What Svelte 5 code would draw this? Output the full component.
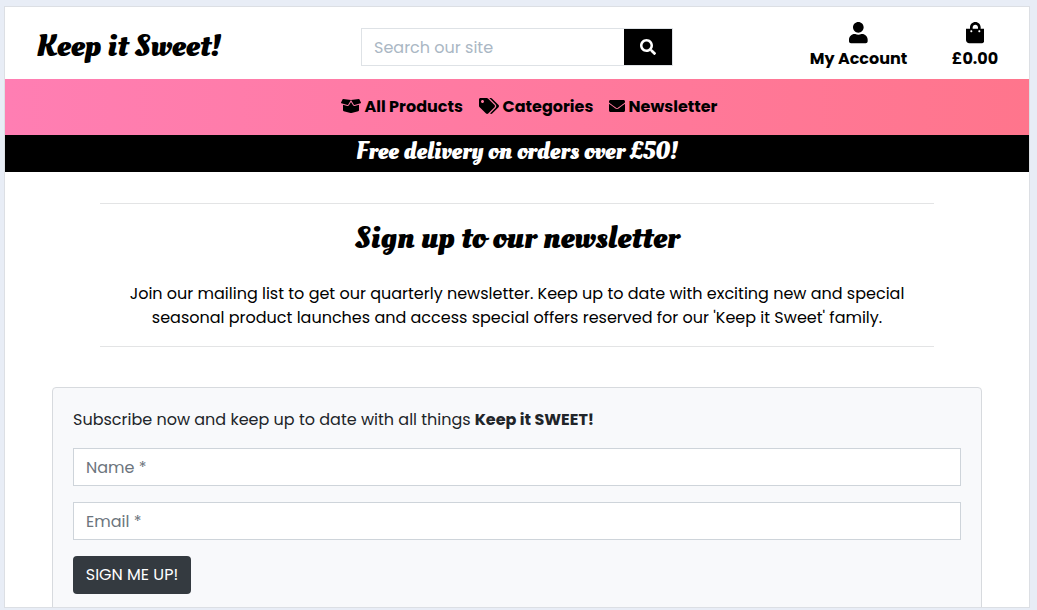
<script>
  const navItems = [
    {
      label: 'All Products',
      cls: 'products',
      viewBox: '0 0 640 512',
      width: 20,
      path: 'M425.7 256c-16.9 0-32.8-9-41.4-23.4L320 126l-64.2 106.6c-8.7 14.5-24.6 23.5-41.5 23.5-4.5 0-9-.6-13.3-1.9L64 215v178c0 14.7 10 27.5 24.2 31l216.2 54.1c10.2 2.5 20.9 2.5 31 0L551.8 424c14.2-3.6 24.2-16.4 24.2-31V215l-137 39.1c-4.3 1.3-8.8 1.9-13.3 1.9zm212.6-112.2L586.8 41c-3.1-6.2-9.8-9.8-16.7-8.9L320 64l91.7 152.1c3.8 6.3 11.4 9.3 18.5 7.3l197.9-56.5c9.9-2.9 14.7-13.9 10.2-23.1zM53.2 41L1.7 143.8c-4.6 9.2.3 20.2 10.1 23l197.9 56.5c7.1 2 14.7-1 18.5-7.3L320 64 69.8 32.1c-6.9-.8-13.5 2.7-16.6 8.9z'
    },
    {
      label: 'Categories',
      cls: 'categories',
      viewBox: '0 0 640 512',
      width: 20,
      path: 'M497.941 225.941L286.059 14.059A48 48 0 0 0 252.118 0H48C21.49 0 0 21.49 0 48v204.118a48 48 0 0 0 14.059 33.941l211.882 211.882c18.744 18.745 49.136 18.746 67.882 0l204.118-204.118c18.745-18.745 18.745-49.137 0-67.882zM112 160c-26.51 0-48-21.49-48-48s21.49-48 48-48 48 21.49 48 48-21.49 48-48 48zm513.941 133.823L421.823 497.941c-18.745 18.745-49.137 18.745-67.882 0l-.36-.36L527.64 323.522c16.999-16.999 26.362-39.6 26.362-63.64s-9.362-46.641-26.362-63.64L331.397 0h48.721a48 48 0 0 1 33.941 14.059l211.882 211.882c18.745 18.745 18.745 49.137 0 67.882z'
    },
    {
      label: 'Newsletter',
      cls: 'newsletter',
      viewBox: '0 0 512 512',
      width: 16,
      path: 'M502.3 190.8c3.9-3.1 9.7-.2 9.7 4.7V400c0 26.5-21.5 48-48 48H48c-26.5 0-48-21.5-48-48V195.6c0-5 5.7-7.8 9.7-4.7 22.4 17.4 52.1 39.5 154.1 113.6 21.1 15.4 56.7 47.8 92.2 47.6 35.7.3 72-32.8 92.3-47.6 102-74.1 131.6-96.3 154-113.7zM256 320c23.2.4 56.6-29.2 73.4-41.4 132.7-96.3 142.8-104.7 173.4-128.7 5.8-4.5 9.2-11.5 9.2-18.9v-19c0-26.5-21.5-48-48-48H48c-26.5 0-48 21.5-48 48v19c0 7.4 3.4 14.3 9.2 18.9 30.6 23.9 40.7 32.4 173.4 128.7 16.8 12.2 50.2 41.8 73.4 41.4z'
    }
  ];
</script>

<div class="page">
  <header class="top">
    <a class="brand" href="#home"><span>Keep it Sweet!</span></a>
    <form class="search">
      <input type="text" placeholder="Search our site" />
      <button type="button" aria-label="Search">
        <svg viewBox="0 0 512 512" width="16" height="16"><path fill="currentColor" d="M505 442.7L405.3 343c-4.5-4.5-10.6-7-17-7H372c27.6-35.3 44-79.7 44-128C416 93.1 322.9 0 208 0S0 93.1 0 208s93.1 208 208 208c48.3 0 92.7-16.4 128-44v16.3c0 6.4 2.5 12.5 7 17l99.7 99.7c9.4 9.4 24.6 9.4 33.9 0l28.3-28.3c9.4-9.4 9.4-24.6.1-34zM208 336c-70.7 0-128-57.2-128-128 0-70.7 57.2-128 128-128 70.7 0 128 57.2 128 128 0 70.7-57.2 128-128 128z" /></svg>
      </button>
    </form>
    <div class="actions">
      <a class="action account" href="#account">
        <svg viewBox="0 0 448 512" width="18.67" height="21.33"><path fill="currentColor" d="M224 256c70.7 0 128-57.3 128-128S294.7 0 224 0 96 57.3 96 128s57.3 128 128 128zm89.6 32h-16.7c-22.2 10.2-46.9 16-72.9 16s-50.6-5.8-72.9-16h-16.7C60.2 288 0 348.2 0 422.4V464c0 26.5 21.5 48 48 48h352c26.5 0 48-21.5 48-48v-41.6c0-74.2-60.2-134.4-134.4-134.4z" /></svg>
        <span>My Account</span>
      </a>
      <a class="action bag" href="#bag">
        <svg viewBox="0 0 448 512" width="18.67" height="21.33"><path fill="currentColor" d="M352 160v-32C352 57.42 294.579 0 224 0 153.42 0 96 57.42 96 128v32H0v272c0 44.183 35.817 80 80 80h288c44.183 0 80-35.817 80-80V160h-96zm-192-32c0-35.29 28.71-64 64-64s64 28.71 64 64v32H160v-32zm160 120c-13.255 0-24-10.745-24-24s10.745-24 24-24 24 10.745 24 24-10.745 24-24 24zm-192 0c-13.255 0-24-10.745-24-24s10.745-24 24-24 24 10.745 24 24-10.745 24-24 24z" /></svg>
        <span>£0.00</span>
      </a>
    </div>
  </header>

  <nav>
    {#each navItems as item}
      <a class={item.cls} href="#{item.cls}">
        <svg viewBox={item.viewBox} width={item.width} height="16"><path fill="currentColor" d={item.path} /></svg>
        <span>{item.label}</span>
      </a>
    {/each}
  </nav>

  <div class="delivery"><span>Free delivery on orders over £50!</span></div>

  <section class="intro">
    <h1><span>Sign up to our newsletter</span></h1>
    <p>
      <span>Join our mailing list to get our quarterly newsletter. Keep up to date with exciting new and special</span>
      <span>seasonal product launches and access special offers reserved for our 'Keep it Sweet' family.</span>
    </p>
  </section>

  <form class="card">
    <p><span>Subscribe now and keep up to date with all things</span><strong>Keep it SWEET!</strong></p>
    <input type="text" placeholder="Name *" />
    <input type="email" placeholder="Email *" />
    <button type="button">SIGN ME UP!</button>
  </form>
</div>

<style>
  :global(body) {
    margin: 0;
    background: #e8edf6;
  }
  .page, .page * { box-sizing: border-box; }
  .page {
    width: 1026px;
    height: 602px;
    margin: 6px 0 0 4px;
    border: 1px solid #dcdfe4;
    background: #fff;
    overflow: hidden;
    color: #000;
    font: 400 16px/24px Poppins, Inter, sans-serif;
  }
  :global(#app) { display: flow-root; height: 610px; overflow: hidden; }
  a { color: inherit; text-decoration: none; }
  svg { display: block; flex: none; }
  span, strong { white-space: nowrap; }
  input, button { font: inherit; margin: 0; }

  .top {
    height: 72px;
    display: grid;
    grid-template-columns: 356px 312px 1fr;
    align-items: center;
  }
  .brand, .delivery, h1 {
    font-family: "Oleo Script", Lobster, "Liberation Serif", serif;
    font-weight: 700;
  }
  .brand { padding: 6px 0 0 31px; font-size: 32px; line-height: 40px; }
  .search {
    height: 38px;
    margin-top: 8px;
    display: flex;
    border: 1px solid #dee2e6;
  }
  .search input {
    width: 262px;
    padding: 2px 12px 0;
    border: 0;
    outline: 0;
    background: #fff;
  }
  .search input::placeholder { color: #aab7c4; opacity: 1; }
  .search button {
    flex: 1;
    border: 0;
    padding: 0;
    display: grid;
    place-items: center;
    background: #000;
    color: #fff;
  }
  .actions {
    display: flex;
    justify-content: flex-end;
    gap: 44px;
    padding: 7px 30.5px 0 0;
    font-weight: 700;
  }
  .action { display: flex; flex-direction: column; align-items: center; gap: 3px; }
  .account { width: 98px; }
  .bag { width: 47px; }

  nav {
    height: 56px;
    display: flex;
    justify-content: center;
    gap: 16px;
    padding: 0 0 2px 24px;
    background: linear-gradient(to right, #ff7eb3, #ff758c);
    font-weight: 700;
  }
  nav a { display: flex; align-items: center; gap: 3.5px; }
  nav span { padding-top: 2px; }
  .products { width: 122px; }
  .categories { width: 114px; }
  .newsletter { width: 108px; }

  .delivery {
    height: 37px;
    background: #000;
    color: #fff;
    text-align: center;
    font-size: 24px;
    line-height: 33px;
  }

  .intro {
    width: 834px;
    height: 144px;
    margin: 31px 0 0 95px;
    border: solid #e3e4e5;
    border-width: 1px 0;
    text-align: center;
  }
  h1 { margin: 15px 0 0; font-size: 32px; line-height: 38px; }
  .intro p { margin: 25px 0 0; display: flex; flex-direction: column; align-items: center; }

  .card {
    width: 930px;
    height: 260px;
    margin: 40px 0 0 47px;
    padding: 20px;
    display: flex;
    flex-direction: column;
    align-items: flex-start;
    border: 1px solid #d7dade;
    border-radius: 4px;
    background: #f8f9fb;
    color: #212529;
  }
  .card p { margin: 0 0 16px; display: flex; gap: 4px; }
  .card input {
    width: 100%;
    height: 38px;
    flex: none;
    margin-bottom: 16px;
    padding: 0 12px;
    border: 1px solid #ced4da;
    border-radius: 0;
    outline: 0;
    background: #fff;
  }
  .card input::placeholder { color: #6c757d; opacity: 1; }
  .card button {
    width: 118px;
    height: 38px;
    flex: none;
    padding: 0;
    border: 0;
    border-radius: 4px;
    background: #343a40;
    color: #fff;
    white-space: nowrap;
  }
</style>
